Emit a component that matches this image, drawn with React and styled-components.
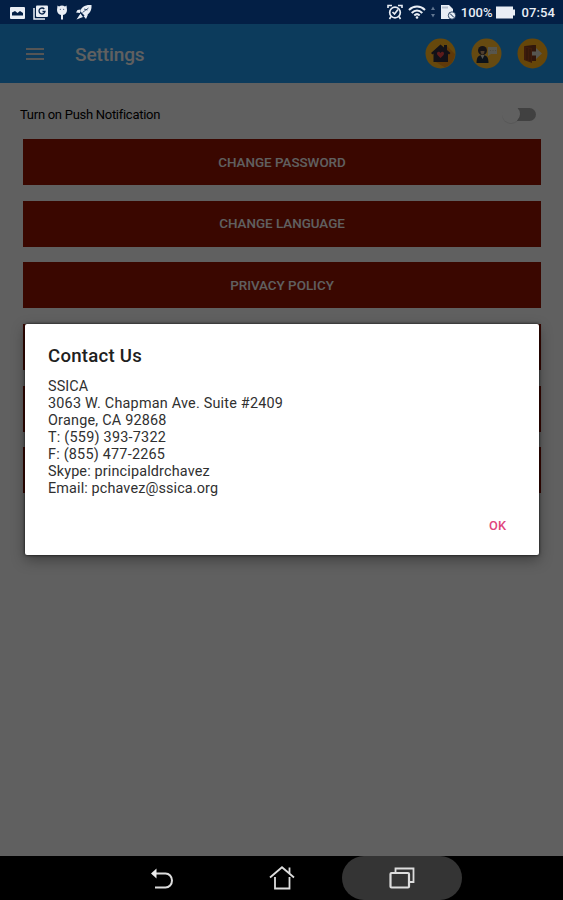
import React from 'react'
import styled, { createGlobalStyle } from 'styled-components'

const GlobalStyle = createGlobalStyle`
  * {
    box-sizing: border-box;
  }

  body {
    margin: 0;
    font-family: Roboto, "Liberation Sans", sans-serif;
    background: #000;
  }
`;

const Screen = styled.div`
  position: relative;
  display: flex;
  flex-direction: column;
  width: 563px;
  height: 900px;
  overflow: hidden;
  background: #f1f1f1;
`;

const StatusBar = styled.header`
  display: flex;
  align-items: center;
  justify-content: space-between;
  flex: none;
  height: 24px;
  padding: 0 8px 0 9px;
  color: #e9eef5;
  background: #031f45;
`;

const StatusGroup = styled.div`
  display: flex;
  align-items: center;
  gap: ${({ $gap }) => $gap || 0}px;
`;

const StatusText = styled.span`
  font-size: 13px;
  line-height: 24px;
  font-weight: 500;
  letter-spacing: ${({ $spacing }) => $spacing || 0}px;
  margin-left: ${({ $left }) => $left || 0}px;
  padding-top: 1px;
`;

const Icon = styled.svg`
  display: block;
  flex: none;
  overflow: visible;
`;

const Window = styled.div`
  position: relative;
  display: flex;
  flex-direction: column;
  flex: 1;
`;

const Toolbar = styled.div`
  display: flex;
  align-items: center;
  height: 59px;
  padding: 0 15px 0 26px;
  background: #1f94e6;
`;

const Title = styled.h1`
  flex: 1;
  margin: 1px 0 0 31px;
  font-size: 19px;
  font-weight: 500;
  letter-spacing: -0.1px;
  color: #f0f0f0;
`;

const Actions = styled.div`
  display: flex;
  gap: 15px;
`;

const Content = styled.main`
  display: flex;
  flex-direction: column;
  padding: 19px 22px 0 23px;
`;

const NotificationRow = styled.div`
  display: flex;
  align-items: center;
  justify-content: space-between;
  height: 24px;
  margin: 0 5px 13px -3px;
  font-size: 13px;
  letter-spacing: -0.28px;
  color: #000;
`;

const Switch = styled.div`
  display: flex;
  align-items: center;
  justify-content: flex-end;
  width: 34px;
  height: 18px;
`;

const Thumb = styled.div`
  z-index: 1;
  width: 18px;
  height: 18px;
  margin-right: -9px;
  border-radius: 50%;
  background: #f1f1f1;
  box-shadow: 0 1px 1px rgba(0, 0, 0, 0.1);
`;

const Track = styled.div`
  width: 25px;
  height: 13px;
  border-radius: 7px;
  background: #a2a2a2;
`;

const Buttons = styled.div`
  display: flex;
  flex-direction: column;
  gap: 15.7px;
`;

const Button = styled.button`
  height: 46px;
  padding: 0;
  border: 0;
  font-family: inherit;
  font-size: 13.4px;
  font-weight: 500;
  color: #f0f0f0;
  background: #911200;
`;

const Scrim = styled.div`
  position: absolute;
  inset: 0;
  z-index: 2;
  padding: 300px 24px 0 25px;
  background: rgba(0, 0, 0, 0.6);
`;

const Dialog = styled.section`
  display: flex;
  flex-direction: column;
  height: 231px;
  padding: 21px 23px 0;
  border-radius: 2px;
  background: #fff;
  box-shadow: 0 0 3px rgba(0, 0, 0, 0.9), 0 5px 14px rgba(0, 0, 0, 0.35);
`;

const DialogTitle = styled.h2`
  margin: 0 0 11px;
  font-size: 18.6px;
  line-height: 23px;
  font-weight: 500;
  letter-spacing: 0.25px;
  color: #202020;
`;

const Details = styled.div`
  font-size: 14.4px;
  line-height: 16.95px;
  color: #303030;
`;

const Line = styled.div`
  letter-spacing: ${({ $spacing }) => $spacing}px;
`;

const OkButton = styled.button`
  align-self: flex-end;
  margin: 19px 10px 0 0;
  padding: 0;
  border: 0;
  font-family: inherit;
  font-size: 12.8px;
  line-height: 17px;
  font-weight: 500;
  color: #e0457c;
  background: none;
`;

const NavBar = styled.nav`
  display: flex;
  justify-content: center;
  flex: none;
  height: 44px;
  background: #000;
`;

const NavItem = styled.div`
  display: flex;
  align-items: center;
  justify-content: center;
  width: 120px;
  border-radius: 22px;
  background: ${({ $active }) => ($active ? '#343434' : 'transparent')};
`;

const PictureIcon = () => (
  <Icon width="16" height="13" viewBox="0 0 16 13">
    <rect x="1" y="1" width="15" height="12" rx="1" fill="currentColor" />
    <path d="M3 9.500V6.500l3-1.500 2.500 2 2.500-2 3 2v2.500z" fill="#031f45" />
  </Icon>
);

const GalleryIcon = () => (
  <Icon width="15" height="15" viewBox="0 0 15 15">
    <path d="M1 3v11h11" fill="none" stroke="currentColor" strokeWidth="1.500" />
    <rect x="3" y="0.500" width="12" height="11.500" rx="1" fill="currentColor" />
    <path d="M11.300 4A3 3 0 1 0 12 6.500H9.500" fill="none" stroke="#031f45" strokeWidth="1.300" />
  </Icon>
);

const BalloonIcon = () => (
  <Icon width="12" height="15" viewBox="0 0 12 15">
    <path d="M1.500 .5 3 1.500A5 5 0 0 1 9 1.500L10.500 .5 11 5C11 8 9 9.800 7 10v4.500H5V10C3 9.800 1 8 1 5z" fill="currentColor" />
    <circle cx="4.300" cy="4.300" r=".5" fill="#031f45" />
    <circle cx="7.700" cy="4.300" r=".5" fill="#031f45" />
  </Icon>
);

const RocketIcon = () => (
  <Icon width="16" height="15" viewBox="0 0 16 15">
    <path d="M15.500 0C9-.5 5 2 4.500 6.500L8.500 10.500C13 10 16 6 15.500 0zM4.500 4.500 1.500 5 0 7.500l4 .5zM12 9.500l-2 4.500-2.500-3zM4.500 8.500.5 14.500 7 12z" fill="currentColor" />
    <path d="m6.500 7.500 6-4.500M8 4l3.500 1" stroke="#031f45" strokeWidth=".7" />
  </Icon>
);

const AlarmIcon = () => (
  <Icon width="16" height="16" viewBox="0 0 16 16" fill="none" stroke="currentColor">
    <circle cx="8" cy="8.500" r="5.300" strokeWidth="1.700" />
    <path d="M1 4V1.500h4M15 4V1.500h-4M4 12.500 2.500 15M12 12.500l1.500 2.500" strokeWidth="1.600" />
    <path d="M5.500 8 7.500 10 11 5.500" strokeWidth="1.700" />
  </Icon>
);

const WifiIcon = () => (
  <Icon width="18" height="14" viewBox="0 0 18 14" fill="none" stroke="currentColor" strokeWidth="2">
    <path d="M1 5C5.500.4 12.500.4 17 5M3.700 8C7 4.700 11 4.700 14.300 8M6.300 10.500C8 8.800 10 8.800 11.700 10.500" />
    <circle cx="9" cy="12.500" r="1.300" fill="currentColor" stroke="none" />
  </Icon>
);

const DataIcon = () => (
  <Icon width="4" height="12" viewBox="0 0 4 12">
    <path d="M0 4 2 .5l2 3.500zM0 8 2 11.500l2-3.500z" fill="#60758f" />
  </Icon>
);

const SimIcon = () => (
  <Icon width="16" height="16" viewBox="0 0 16 16">
    <path d="M1 1h8l4 4v10H1z" fill="currentColor" />
    <path d="M3 2.500v2M5 2.500v2M7 2.500v2" stroke="#8090a5" />
    <circle cx="12" cy="11.500" r="3.700" fill="currentColor" stroke="#031f45" strokeWidth=".8" />
    <path d="m10 9.500 4 4" stroke="#031f45" />
  </Icon>
);

const BatteryIcon = () => (
  <Icon width="19" height="13" viewBox="0 0 19 13">
    <path d="M0 .5h17v3h2v6h-2v3H0z" fill="currentColor" />
  </Icon>
);

const MenuIcon = () => (
  <Icon width="18" height="14" viewBox="0 0 18 14">
    <path d="M0 2h18M0 7h18M0 12h18" stroke="#d5d5d5" strokeWidth="1.800" />
  </Icon>
);

const HomeBadge = () => (
  <Icon width="31" height="31" viewBox="0 0 31 31">
    <circle cx="15.500" cy="15.500" r="15" fill="#ffb51f" />
    <path d="M21 7 30 16A15 15 0 0 1 20 29.500L9 23z" fill="#ef8f17" />
    <path d="m6 15 9.500-8.500L19 9.500V7h3v5l3.500 3-1.500 1.500-1-.8V24H8.500v-8.500L7.500 16.500z" fill="#2d2b3d" />
    <path d="m15.500 20-3-3c-1.800-2.800 1.500-4.500 3-2 1.500-2.500 4.800-.8 3 2z" fill="#e94444" />
  </Icon>
);

const ContactBadge = () => (
  <Icon width="31" height="31" viewBox="0 0 31 31">
    <circle cx="15.500" cy="15.500" r="15" fill="#ffb82c" />
    <path d="M5.500 25c0-6 2-8 6-8s6 2 6 8z" fill="#222e40" />
    <path d="m9.500 17 2 4 2-4z" fill="#d8d1c5" />
    <circle cx="11.500" cy="12.500" r="4.500" fill="#393039" />
    <path d="M9.500 13h4c0 4.500-4 4.500-4 0" fill="#c99b72" />
    <path d="M17 9h9v7h-6l-3 2z" fill="#ddd6bd" />
    <path d="M19 12.500h1M21.500 12.500h1M24 12.500h1" stroke="#bdb596" />
  </Icon>
);

const ExitBadge = () => (
  <Icon width="31" height="31" viewBox="0 0 31 31">
    <circle cx="15.500" cy="15.500" r="15" fill="#ffae18" />
    <path d="m8 8 8-1h3v16h-3l-8-1z" fill="#7a391d" />
    <path d="m7 8 8 2v15l-8-3z" fill="#9c451c" />
    <path d="M10 10v12M13 11v12" stroke="#703517" />
    <path d="M15 13.500h4V10l6 5.500-6 5.500v-3.500h-4z" fill="#d9d6c7" />
  </Icon>
);

const BackIcon = () => (
  <Icon width="22" height="21" viewBox="0 0 22 21">
    <path d="M5 5.500h9.500a6.500 7 0 0 1 0 14H4" fill="none" stroke="#ddd" strokeWidth="2" />
    <path d="M0 5.500 5.500 .5v10z" fill="#ececec" />
  </Icon>
);

const HomeIcon = () => (
  <Icon width="26" height="24" viewBox="0 0 26 24" fill="none" stroke="#ddd" strokeWidth="1.800">
    <path d="M1 11.500 13 1.300l12 10.200M20.500 7V1.500" />
    <path d="M6 11v11.500h14.500V11" />
  </Icon>
);

const RecentsIcon = () => (
  <Icon width="26" height="22" viewBox="0 0 26 22" fill="none" stroke="#ddd">
    <path d="M6.500 5V1.500H24.500V15h-4" strokeWidth="1.800" />
    <rect x="1.500" y="6" width="18.500" height="14.500" rx="1" strokeWidth="2.200" />
  </Icon>
);

const options = [
  'CHANGE PASSWORD',
  'CHANGE LANGUAGE',
  'PRIVACY POLICY',
  '',
  '',
  '',
];

const contact = [
  { text: 'SSICA', spacing: 0.1 },
  { text: '3063 W. Chapman Ave. Suite #2409', spacing: 0.21 },
  { text: 'Orange, CA 92868', spacing: 0.22 },
  { text: 'T: (559) 393-7322', spacing: 0.24 },
  { text: 'F: (855) 477-2265', spacing: 0.22 },
  { text: 'Skype: principaldrchavez', spacing: 0.16 },
  { text: 'Email: pchavez@ssica.org', spacing: 0.13 },
];

const App = () => {
  return (
    <>
      <GlobalStyle />
      <Screen>
        <StatusBar>
          <StatusGroup $gap={8}>
            <PictureIcon />
            <GalleryIcon />
            <BalloonIcon />
            <RocketIcon />
          </StatusGroup>
          <StatusGroup>
            <StatusGroup $gap={5}>
              <AlarmIcon />
              <WifiIcon />
              <DataIcon />
              <SimIcon />
            </StatusGroup>
            <StatusText $left={5}>100%</StatusText>
            <StatusGroup $gap={3}>
              <i />
              <BatteryIcon />
            </StatusGroup>
            <StatusText $left={7} $spacing={0.1}>07:54</StatusText>
          </StatusGroup>
        </StatusBar>
        <Window>
          <Toolbar>
            <MenuIcon />
            <Title>Settings</Title>
            <Actions>
              <HomeBadge />
              <ContactBadge />
              <ExitBadge />
            </Actions>
          </Toolbar>
          <Content>
            <NotificationRow>
              Turn on Push Notification
              <Switch>
                <Thumb />
                <Track />
              </Switch>
            </NotificationRow>
            <Buttons>
              {options.map((label, i) => (
                <Button key={i}>{label}</Button>
              ))}
            </Buttons>
          </Content>
          <Scrim>
            <Dialog>
              <DialogTitle>Contact Us</DialogTitle>
              <Details>
                {contact.map(({ text, spacing }) => (
                  <Line key={text} $spacing={spacing}>{text}</Line>
                ))}
              </Details>
              <OkButton>OK</OkButton>
            </Dialog>
          </Scrim>
        </Window>
        <NavBar>
          <NavItem><BackIcon /></NavItem>
          <NavItem><HomeIcon /></NavItem>
          <NavItem $active><RecentsIcon /></NavItem>
        </NavBar>
      </Screen>
    </>
  )
}

export default App
